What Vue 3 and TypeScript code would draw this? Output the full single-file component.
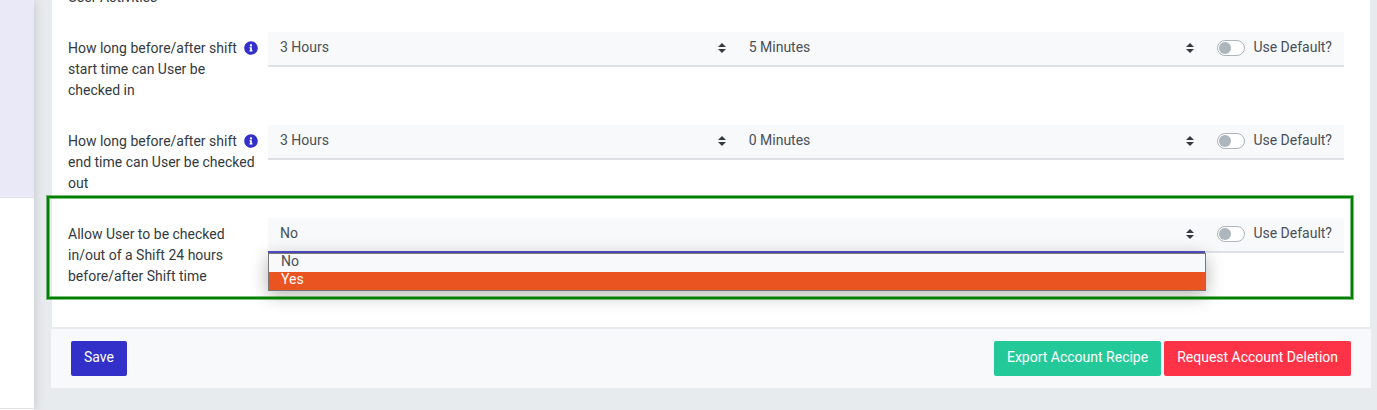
<script setup lang="ts">
import { reactive, ref } from 'vue'

interface Field {
  key: string
  value: string
  choices: string[]
}

interface Setting {
  id: string
  label: string
  hint: boolean
  open: boolean
  useDefault: boolean
  fields: Field[]
}

const hours = ['1 Hour', '2 Hours', '3 Hours', '4 Hours']
const minutes = ['0 Minutes', '5 Minutes', '10 Minutes', '15 Minutes']

const settings = reactive<Setting[]>([
  {
    id: 'check-in',
    label: 'How long before/after shift start time can User be checked in',
    hint: true,
    open: false,
    useDefault: false,
    fields: [
      { key: 'hours', value: '3 Hours', choices: hours },
      { key: 'minutes', value: '5 Minutes', choices: minutes },
    ],
  },
  {
    id: 'check-out',
    label: 'How long before/after shift end time can User be checked out',
    hint: true,
    open: false,
    useDefault: false,
    fields: [
      { key: 'hours', value: '3 Hours', choices: hours },
      { key: 'minutes', value: '0 Minutes', choices: minutes },
    ],
  },
  {
    id: 'allow-24',
    label: 'Allow User to be checked in/out of a Shift 24 hours before/after Shift time',
    hint: false,
    open: true,
    useDefault: false,
    fields: [{ key: 'allow', value: 'No', choices: ['No', 'Yes'] }],
  },
])

const hovered = ref('Yes')

function choose(setting: Setting, field: Field, choice: string) {
  field.value = choice
  setting.open = false
}
</script>

<template>
  <div class="page">
    <aside class="sidebar">
      <div class="side-item active"></div>
      <div class="side-item"></div>
    </aside>

    <main class="main">
      <form class="card" @submit.prevent>
        <section class="card-body">
          <h2 class="heading">User Activities</h2>

          <div
            v-for="s in settings"
            :key="s.id"
            class="row"
            :class="{ highlighted: s.open }"
          >
            <label class="row-label" :for="`${s.id}-${s.fields[0].key}`">
              <svg v-if="s.hint" class="info" viewBox="0 0 512 512" aria-hidden="true">
                <path
                  d="M256 8C119.043 8 8 119.083 8 256c0 136.997 111.043 248 248 248s248-111.003 248-248C504 119.083 392.957 8 256 8zm0 110c23.196 0 42 18.804 42 42s-18.804 42-42 42-42-18.804-42-42 18.804-42 42-42zm56 254c0 6.627-5.373 12-12 12h-88c-6.627 0-12-5.373-12-12v-24c0-6.627 5.373-12 12-12h12v-64h-12c-6.627 0-12-5.373-12-12v-24c0-6.627 5.373-12 12-12h64c6.627 0 12 5.373 12 12v100h12c6.627 0 12 5.373 12 12v24z"
                />
              </svg>
              {{ s.label }}
            </label>

            <div class="group">
              <div v-for="f in s.fields" :key="f.key" class="select-wrap">
                <select
                  :id="`${s.id}-${f.key}`"
                  v-model="f.value"
                  class="select"
                  :class="{ focused: s.open }"
                  :aria-label="`${s.label}: ${f.key}`"
                >
                  <option v-for="c in f.choices" :key="c" :value="c">{{ c }}</option>
                </select>
                <svg class="arrows" viewBox="0 0 4 5" aria-hidden="true">
                  <path d="M2 0L0 2h4zm0 5L0 3h4z" />
                </svg>
                <ul v-if="s.open" class="menu" role="listbox" :aria-label="s.label">
                  <li
                    v-for="c in f.choices"
                    :key="c"
                    class="menu-item"
                    :class="{ hovered: hovered === c }"
                    role="option"
                    :aria-selected="f.value === c"
                    @mouseenter="hovered = c"
                    @click="choose(s, f, c)"
                  >
                    {{ c }}
                  </li>
                </ul>
              </div>
              <label class="default">
                <input v-model="s.useDefault" class="switch" type="checkbox" />
                Use Default?
              </label>
            </div>
          </div>
        </section>

        <footer class="card-footer">
          <button class="btn save" type="submit">Save</button>
          <div class="actions">
            <button class="btn export" type="button">Export Account Recipe</button>
            <button class="btn delete" type="button">Request Account Deletion</button>
          </div>
        </footer>
      </form>
    </main>
  </div>
</template>

<style>
body {
  background: #e8ebee;
}
</style>

<style scoped>
.page,
.page * {
  box-sizing: border-box;
}

.page {
  display: flex;
  height: 100vh;
  overflow: hidden;
  font: 14px/21px Roboto, "Liberation Sans", sans-serif;
  color: #343a40;
  background: #e8ebee;
}

.sidebar {
  flex: 0 0 34px;
  background: #fff;
  box-shadow: 0 0 12px rgba(0, 0, 0, 0.16);
}

.side-item {
  height: 211px;
  border-bottom: 1px solid #dee0ea;
}

.side-item.active {
  height: 198px;
  background: #eae9f7;
}

.main {
  flex: 1;
  min-width: 0;
  padding: 0 6px 22px 17px;
}

.card {
  display: flow-root;
}

.card-body {
  display: flow-root;
  margin: 0 1px;
  padding: 0 26px 16px 16px;
  background: #fff;
}

.heading {
  margin: -13px 0 24px;
  font: inherit;
}

.row {
  position: relative;
  display: flex;
  align-items: flex-start;
  margin-bottom: 24px;
}

.row.highlighted::after {
  content: "";
  position: absolute;
  inset: -22px -9px -12px -21px;
  border: 2px solid #008000;
  box-shadow: 0 0 0 1px rgba(0, 128, 0, 0.5), inset 0 0 0 1px rgba(0, 128, 0, 0.5);
  pointer-events: none;
}

.row-label {
  flex: 0 0 200px;
  padding: 6px 10px 0 0;
}

.info {
  float: right;
  width: 14px;
  height: 14px;
  margin-top: 3px;
  fill: #3230c8;
}

.group {
  flex: 1;
  display: flex;
  min-width: 0;
}

.select-wrap {
  position: relative;
  flex: 1;
  min-width: 0;
}

.select {
  display: block;
  width: 100%;
  height: 35px;
  margin: 0;
  padding: 5px 28px 7px 12px;
  border: 0;
  border-bottom: 2px solid #dee0e6;
  border-radius: 0;
  appearance: none;
  outline: none;
  background: #f8f9fb;
  color: #495057;
  font: inherit;
}

.select.focused {
  border-bottom-color: #5350c6;
}

.arrows {
  position: absolute;
  top: 11px;
  right: 11px;
  width: 8px;
  height: 10px;
  fill: #343a40;
  pointer-events: none;
}

.menu {
  position: absolute;
  top: 35px;
  left: 0;
  right: -1px;
  margin: 0;
  padding: 0;
  border: 1px solid #77787a;
  list-style: none;
  background: #f8f9fb;
  box-shadow: 0 4px 18px rgba(0, 0, 0, 0.3);
  color: #495057;
  line-height: 14px;
}

.menu-item {
  padding: 0 12px 4px;
}

.menu-item.hovered {
  background: #e95420;
  color: #fff;
}

.default {
  display: flex;
  align-items: center;
  gap: 8px;
  height: 35px;
  padding: 0 12px 2px;
  border-bottom: 2px solid #dee2e6;
  background: #f8f9fb;
  color: #495057;
  white-space: nowrap;
}

.switch {
  width: 28px;
  height: 16px;
  margin: 0;
  border: 1px solid #adb5bd;
  border-radius: 8px;
  appearance: none;
  background: #fff;
}

.switch::before {
  content: "";
  display: block;
  width: 12px;
  height: 12px;
  margin: 1px;
  border-radius: 50%;
  background: #adb5bd;
}

.switch:checked::before {
  margin-left: 13px;
  background: #3230c8;
}

.card-footer {
  display: flex;
  justify-content: space-between;
  padding: 12px 20px;
  border-top: 2px solid #e8ebee;
  background: #f8f9fb;
}

.actions {
  display: flex;
  gap: 3px;
}

.btn {
  height: 35px;
  padding: 5px 13px 7px;
  border: 0;
  border-radius: 2px;
  color: #fff;
  font: inherit;
}

.save {
  background: #3230c8;
}

.export {
  background: #24c99a;
}

.delete {
  background: #ff3347;
}
</style>
